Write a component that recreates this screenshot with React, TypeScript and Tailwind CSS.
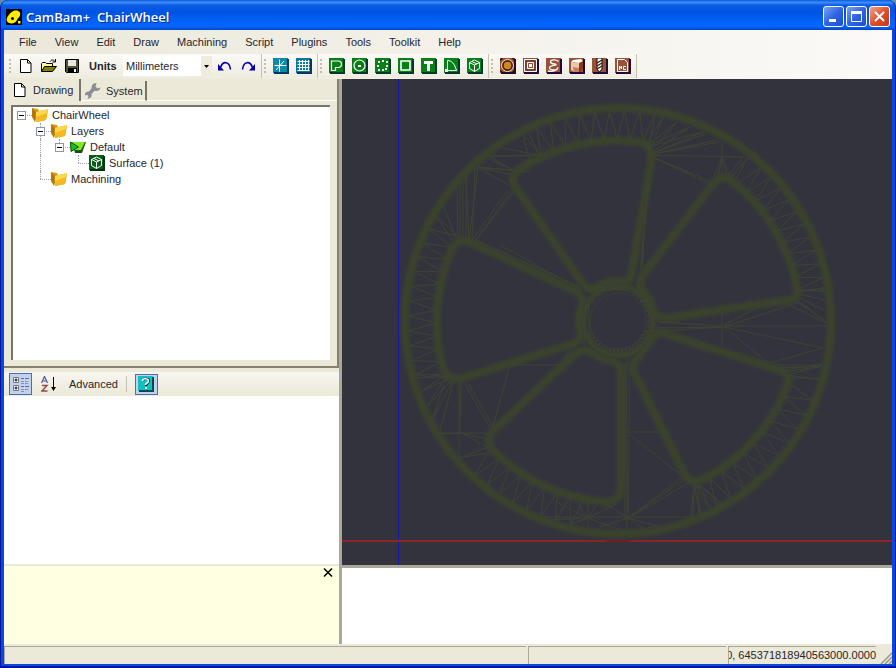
import type { ReactNode } from 'react';

const menus = ['File', 'View', 'Edit', 'Draw', 'Machining', 'Script', 'Plugins', 'Tools', 'Toolkit', 'Help'];

type Cell = 'blank' | 'line' | 'elbow' | 'root' | 'open' | 'last';

const tree: { label: string; cells: Cell[]; icon: 'folder' | 'layer' | 'surface' }[] = [
  { label: 'ChairWheel', cells: ['root'], icon: 'folder' },
  { label: 'Layers', cells: ['blank', 'open'], icon: 'folder' },
  { label: 'Default', cells: ['blank', 'line', 'last'], icon: 'layer' },
  { label: 'Surface (1)', cells: ['blank', 'line', 'blank', 'elbow'], icon: 'surface' },
  { label: 'Machining', cells: ['blank', 'elbow'], icon: 'folder' },
];

/* ---------- icons ---------- */

function Svg({ children, size = 16 }: { children: ReactNode; size?: number }) {
  return (
    <svg width={size} height={size} viewBox={`0 0 ${size} ${size}`} fill="none" aria-hidden="true" className="shrink-0">
      {children}
    </svg>
  );
}

function Tile({ color, shade, children }: { color: string; shade: string; children: ReactNode }) {
  return (
    <Svg>
      <path d="M1 1h15v15H1z" fill={shade} />
      <path d="M0 0h15v15H0z" fill={color} />
      <path d="M14.5 1v13.5H1" stroke={shade} />
      {children}
    </Svg>
  );
}

const NewIcon = () => (
  <Svg>
    <path d="M2.500 1.500h7l3.500 3.500v9.500H2.500z" fill="#fff" stroke="#000" />
    <path d="M9.500 1.500V5H13" stroke="#000" />
  </Svg>
);

const OpenIcon = () => (
  <Svg>
    <path d="M.5 13.500V5.500l1-1h3l1 1h6v3" fill="#ffff9c" stroke="#000" />
    <path d="M.5 13.500l3-5h12l-4 5z" fill="#808000" stroke="#000" />
    <path d="M9 3.500c1.500-2 3.500-2 5 0M14.500 1v3h-3" stroke="#000" />
  </Svg>
);

const SaveIcon = () => (
  <Svg>
    <path d="M1.500 1.500h13v13h-12l-1-1z" fill="#55552a" stroke="#000" />
    <path d="M4 2h8v6H4z" fill="#e8e8e8" />
    <path d="M4 10h9v5H4z" fill="#000" />
    <path d="M10 11h2v3h-2z" fill="#fff" />
  </Svg>
);

const UndoIcon = () => (
  <Svg>
    <path d="M3.500 9.500C6 2.500 12.500 3 13.500 11.500" stroke="#0000a8" strokeWidth="1.600" />
    <path d="M1 6v6.500h6z" fill="#0000a8" />
  </Svg>
);

const RedoIcon = () => (
  <Svg>
    <path d="M12.500 9.500C10 2.500 3.500 3 2.500 11.500" stroke="#0000a8" strokeWidth="1.600" />
    <path d="M15 6v6.500H9z" fill="#0000a8" />
  </Svg>
);

const viewTools = [
  {
    name: 'Show axis',
    icon: (
      <Tile color="#0c8aa8" shade="#003a60">
        <path d="M6.500 1.500v12M1.500 7.500h12M3 12l8-9" stroke="#fff" />
      </Tile>
    ),
  },
  {
    name: 'Show grid',
    icon: (
      <Tile color="#0878a0" shade="#003a60">
        <path d="M3.500 2v11M6.500 2v11M9.500 2v11M12.500 2v11M1.500 3.500h12M1.500 6.500h12M1.500 9.500h12M1.500 12.500h12" stroke="#fff" />
      </Tile>
    ),
  },
];

const drawTools = [
  { name: 'Polyline', art: <path d="M2.500 12.500v-9.500h7a3 3 0 0 1 3 3.500a3 3 0 0 1-3 3h-3v3z" stroke="#fff" strokeWidth="1.200" /> },
  {
    name: 'Circle',
    art: (
      <>
        <circle cx="7.500" cy="7.500" r="5.500" stroke="#fff" strokeWidth="1.200" />
        <path d="M6 7h3v2H6z" fill="#fff" />
      </>
    ),
  },
  {
    name: 'Point list',
    art: <path d="M3 3h2v2H3zM7 2h2v2H7zM11 3h2v2h-2zM2 7h2v2H2zM11 7h2v2h-2zM3 11h2v2H3zM7 11h2v2H7zM10 10h2v2h-2z" fill="#fff" />,
  },
  { name: 'Rectangle', art: <path d="M3 3h9v9H3z" stroke="#fff" strokeWidth="1.600" /> },
  { name: 'Text', art: <path d="M3 3h9v3H9v7H6V6H3z" fill="#fff" /> },
  {
    name: 'Arc',
    art: (
      <>
        <path d="M3.500 12.500v-10c4 0 7 3 9 10z" stroke="#fff" />
        <path d="M1 11h3v3H1z" fill="#fff" />
      </>
    ),
  },
  { name: 'Surface', art: <Cube /> },
];

function Cube() {
  return <path d="M2.500 4.500l5-2.500 5 2.500v6l-5 3-5-3zM2.500 4.500l5 2.500 5-2.500M7.500 7v6.500M5 3.500l5 2.500" stroke="#fff" />;
}

const camTools = [
  {
    name: 'Profile',
    art: (
      <>
        <circle cx="7.500" cy="7.500" r="6" stroke="#ffdca8" />
        <circle cx="7.500" cy="7.500" r="4.500" fill="#d08818" stroke="#382008" strokeWidth="1.400" />
        <path d="M0 2.500L2.500 0M12.500 0L15 2.500M0 12.500L2.500 15M12 15l3-3" stroke="#281008" strokeWidth="1.400" />
      </>
    ),
  },
  {
    name: 'Pocket',
    art: (
      <>
        <path d="M1.500 1.500h12v12h-12zM4.500 4.500h6v6h-6z" stroke="#fff" />
        <path d="M3 3h9v9H3z" stroke="#5c3020" />
        <path d="M6 6h3v3H6z" fill="#fff" />
      </>
    ),
  },
  {
    name: 'Drill',
    art: (
      <path
        d="M12.500 3.500C10 1 4 1.500 4.500 4s5 1.500 5.500 2.500-6 .5-6.500 3 5 3 7 2M2 13c4 1 9 0 10-3.500"
        stroke="#fff"
        strokeWidth="1.300"
      />
    ),
  },
  {
    name: '3D surface',
    art: (
      <>
        <path d="M2 4v8l3 2h6l3-3V3z" fill="#8a3818" />
        <path d="M2 4l2-2 8-1 2 2-4 2z" fill="#fff" />
        <path d="M2 4l8 1v9H5l-3-2z" fill="#e8c8b0" />
        <path d="M4 9l6 1v4H5z" fill="#c08060" />
      </>
    ),
  },
  {
    name: 'Lathe',
    art: (
      <>
        <path d="M5 0h5v11l-2.500 3L5 11z" fill="#fff" stroke="#201008" />
        <path d="M5 5l5-3M5 8l5-3M5 11l5-3" stroke="#301810" strokeWidth="1.300" />
      </>
    ),
  },
  {
    name: 'NC file',
    art: (
      <>
        <path d="M2.500 1.500h7l3 3v9h-10z" stroke="#fff" />
        <path d="M4.500 12V8l2 3V8M11 8.500H8.500v3H11" stroke="#fff" />
      </>
    ),
  },
];

const FolderIcon = () => (
  <Svg>
    <path d="M0 1l6 1 1 2 9-1-2 10-10 2z" fill="#d89a10" />
    <path d="M0 1l4 4-1 10-3-5z" fill="#b07808" />
    <path d="M4 5l12-3-2 11-10 2z" fill="#f4b820" />
    <path d="M4 5l12-3-1 4-11 4z" fill="#ffd850" />
  </Svg>
);

const LayerIcon = () => (
  <Svg>
    <path d="M2 3h14l-4 11H5z" fill="#205010" />
    <path d="M2 3h13l-4 8H5z" fill="#80e828" />
    <path d="M.5 3l8 5-7.500 4.500z" fill="#18c020" stroke="#085008" />
  </Svg>
);

const SurfaceIcon = () => (
  <Tile color="#086018" shade="#003010">
    <Cube />
  </Tile>
);

const WrenchIcon = () => (
  <Svg size={18}>
    <path
      d="M16.500 5.500l-3 1-2-2 1-3.200c-3-.6-5.500 1.700-4.700 4.800L5 9.500C2.500 9 .500 11 1 13.500l2-.8 1.500 1.500-1 2.200c3 .2 4.700-2 4-4.500l3-3.200c3.300.8 6-.8 6-3.200z"
      fill="#8c8c94"
    />
  </Svg>
);

/* ---------- toolbar ---------- */

function Grip() {
  return (
    <div className="flex w-[3px] flex-col gap-[2px]">
      {[0, 1, 2, 3].map((i) => (
        <span key={i} className="size-[2px] bg-[#c1beb0]" />
      ))}
    </div>
  );
}

function Strip({ children, first }: { children: ReactNode; first?: boolean }) {
  return (
    <div
      className={`flex h-6 items-center gap-[2px] border-r border-[#c5c2b4] bg-linear-to-b from-[#fbfaf6] to-[#efecdf] pr-[2px] ${first ? 'pl-[5px]' : 'pl-[2px]'}`}
    >
      <Grip />
      <div className="flex items-center">{children}</div>
    </div>
  );
}

function Tool({ name, children }: { name: string; children: ReactNode }) {
  return (
    <button type="button" aria-label={name} className="flex h-[22px] w-[23px] items-center justify-center">
      {children}
    </button>
  );
}

/* ---------- tree ---------- */

function TreeCell({ kind }: { kind: Cell }) {
  const hasBox = kind === 'root' || kind === 'open' || kind === 'last';
  return (
    <span className="relative block h-4 w-[19px] shrink-0">
      {(kind === 'line' || kind === 'open') && (
        <span className="absolute inset-y-0 left-2 border-l border-dotted border-[#a0a0a0]" />
      )}
      {(kind === 'elbow' || kind === 'last') && (
        <span className="absolute top-0 left-2 h-2 border-l border-dotted border-[#a0a0a0]" />
      )}
      {kind !== 'line' && kind !== 'blank' && (
        <span className="absolute top-2 right-0 left-2 border-t border-dotted border-[#a0a0a0]" />
      )}
      {hasBox && (
        <button
          type="button"
          aria-label="Collapse"
          className="absolute top-1 left-1 flex size-[9px] items-center justify-center border border-[#8c98a8] bg-white"
        >
          <span className="h-px w-[5px] bg-black" />
        </button>
      )}
    </span>
  );
}

/* ---------- model view ---------- */

const CX = 618;
const CY = 321;

function polar(r: number, deg: number) {
  const a = (deg * Math.PI) / 180;
  return `${(CX + r * Math.cos(a)).toFixed(1)} ${(CY + r * Math.sin(a)).toFixed(1)}`;
}

function zigzag(r1: number, r2: number, from: number, to: number, steps: number) {
  const pts: string[] = [];
  for (let i = 0; i <= steps; i++) {
    pts.push(polar(i % 2 ? r2 : r1, from + ((to - from) * i) / steps));
  }
  return 'M' + pts.join('L');
}

function fan(x: number, y: number, ends: number[][]) {
  return ends.map(([ex, ey]) => `M${x} ${y}L${ex} ${ey}`).join('');
}

const pockets = [
  'M516 188L583 284Q589 292 597 287Q607 281 619 281Q629 284 631 276L651 163Q653 143 638 142A179 179 0 0 0 520 169Q508 177 516 188Z',
  'M713 184L643 275Q637 283 643 291Q650 298 653 309Q656 319 666 318L788 300Q799 298 797 288A179 179 0 0 0 733 182Q722 173 713 184Z',
  'M663 333L779 370Q792 375 787 386A179 179 0 0 1 706 478Q691 486 684 473L634 372Q630 364 638 358L649 343Q654 332 663 333Z',
  'M574 355L493 431Q485 439 492 449A179 179 0 0 0 606 502Q621 501 621 487L621 372Q621 362 610 361Q602 359 593 353Q583 347 574 355Z',
  'M474 244L573 290Q584 295 582 305Q577 317 580 330Q583 341 572 344L462 378Q448 381 443 368A179 179 0 0 1 453 247Q460 237 474 244Z',
];

const mesh = [
  zigzag(182, 210, -119, -80, 19),
  zigzag(182, 210, -49, -8, 21),
  zigzag(182, 210, 20, 62, 19),
  zigzag(182, 210, 101, 135, 16),
  zigzag(182, 210, 163, 210, 23),
  zigzag(28, 36, 20, 160, 36),
  zigzag(29, 38, -60, 20, 16),
  fan(648, 155, [[663, 117], [677, 122], [690, 127], [703, 132], [705, 134], [717, 140], [719, 142], [743, 157], [712, 182], [708, 183], [655, 114]]),
  fan(644, 148, [[663, 117], [677, 122], [690, 127], [703, 132]]),
  'M722 142V178M722 157l-8 20M722 157l8 20M722 157l-4 20M722 157l5 20M748 158l-18 20M748 158l-12 20M743 157l-14 18',
  fan(540, 155, [[502, 148], [490, 157], [488, 156], [529, 134]]),
  fan(513, 170, [[490, 157], [486, 158], [477, 167], [530, 158]]),
  fan(477, 167, [[508, 185], [513, 175], [530, 172]]),
  'M460 240V182M463 240V179M466 240V177M469 240L466 177M472 240L475 168M469 240L478 168M458 240L457 186M456 238L443 205M452 240L436 216',
  'M472 240L508 190M475 241L512 190M478 238L515 190M475 240L580 287M500 245L582 290',
  fan(455, 376, [[417, 378], [420, 392], [427, 407], [433, 418], [440, 430]]),
  fan(447, 374, [[417, 378], [420, 392], [427, 407], [433, 418]]),
  'M459 380V458M461 380L460 432M464 383L492 430M467 382L494 428M492 430L510 365H562L572 342M440 433H490M440 434L462 433L488 448M460 458L488 447M465 457L492 452M462 433L490 440M566 358L578 342',
  'M545 517H692M588 500V528M588 518l-30-15M588 518l28-14M588 518l-42 2M588 518l35 13M588 518l-28 10M588 518l-12-16M588 518l10-16',
  'M627 360V530M630 368L628 518M625 362V518M628 518L606 504M628 518L688 477M628 518L684 476M628 518L690 482M628 518l32 9M628 518l18 12M628 518l-28 9M627 432H660M630 435L690 482',
  fan(694, 484, [[691, 516], [693, 516], [700, 518], [702, 516], [712, 512], [720, 508]]),
  fan(698, 484, [[700, 518], [712, 512], [722, 506], [724, 505]]),
  'M722 315V346M660 322L720 326H826M656 328L722 327M660 331L722 327M724 327L823 348L770 363M724 327L768 363M724 327L800 302M724 325L760 306',
  'M775 365H822M778 368L822 366M785 372L822 366M788 375L820 380M788 378H818M788 375L822 366M785 370L822 364',
  'M797 300L826 322M795 300L824 320M785 303L826 323M800 298L823 310M800 294L824 300M798 290H824M800 292L824 288',
  'M650 170L640 272M648 175L642 270M586 300L584 345M588 300L590 340M584 290H625M590 292L628 287M656 322H680M590 286L628 290M630 283L652 318M638 285L650 312',
].join('');

const layers = [
  { color: '#353838', width: 12 },
  { color: '#383e32', width: 8 },
  { color: '#3a422e', width: 5 },
];

function Wheel() {
  return (
    <svg
      viewBox="342 79 550 486"
      preserveAspectRatio="xMidYMid meet"
      className="block size-full"
      fill="none"
      role="img"
      aria-label="ChairWheel surface"
    >
      {layers.map((s) => (
        <g key={s.width} stroke={s.color} strokeWidth={s.width} strokeLinejoin="round">
          <circle cx={CX} cy={CY} r="213" />
          <circle cx={CX} cy={CY} r="35" strokeWidth={s.width - 2} />
          {pockets.map((d) => (
            <path key={d} d={d} />
          ))}
        </g>
      ))}
      <circle cx={CX} cy={CY} r="28" stroke="#3a4030" />
      <path d={mesh} stroke="#3d4433" strokeWidth="1" />
      <path d="M398.500 -1500V2500" stroke="#1616a8" />
      <path d="M-1500 541H2500" stroke="#8c2325" strokeWidth="2" />
      <path d="M605 541H631" stroke="#7a1a22" strokeWidth="2" />
    </svg>
  );
}

/* ---------- window ---------- */

const captionButton = 'flex size-[21px] items-center justify-center rounded-[3px] border border-white';

export default function App() {
  return (
    <div className="flex h-screen min-h-[480px] flex-col bg-[#5b8fb0] font-['Liberation_Sans',Arial,sans-serif] text-[11px] leading-4 text-[#26262c]">
      <div className="flex min-h-0 flex-1 flex-col rounded-t-lg border-x border-b-2 border-[#0014a0] bg-[#0a48dc]">
        {/* Title bar */}
        <header className="flex h-[30px] shrink-0 items-center rounded-t-lg bg-[linear-gradient(to_bottom,#0a5be0_0%,#3c8cf8_8%,#0a5ce4_18%,#0053e1_40%,#0062f8_70%,#0466ff_88%,#0046c8_100%)] px-[5px] pt-[3px]">
          <svg width="16" height="16" viewBox="0 0 16 16" aria-hidden="true">
            <path d="M0 0h16v16H0z" fill="#000" />
            <path d="M1 9C2 6 6 2 9 1.500c4-.5 6 2 5 5-.5 2-2.500 2.500-3 4.500-1 3-5 4-8 3-2-.8-3-3-2-5z" fill="#ffee00" />
            <circle cx="6.500" cy="9.500" r="1.500" fill="#000" />
            <path d="M12 12h2.500v2.500H12z" fill="#ffee00" />
          </svg>
          <h1 className="ml-1 flex-1 font-['Open_Sans',sans-serif] text-[13px] font-semibold whitespace-pre text-white [text-shadow:1px_1px_#0a2a90]">
            CamBam+  ChairWheel
          </h1>
          <div className="flex gap-[2px]">
            <button type="button" aria-label="Minimize" className={`${captionButton} bg-linear-to-br from-[#7ba2f0] via-[#2f62e4] to-[#1c4ed0]`}>
              <svg width="13" height="13">
                <path d="M2 9h7v3H2z" fill="#fff" />
              </svg>
            </button>
            <button type="button" aria-label="Maximize" className={`${captionButton} bg-linear-to-br from-[#7ba2f0] via-[#2f62e4] to-[#1c4ed0]`}>
              <svg width="13" height="13" fill="none">
                <path d="M1.500 2.500h10v9h-10z" stroke="#fff" />
                <path d="M1 1h11v3H1z" fill="#fff" />
              </svg>
            </button>
            <button type="button" aria-label="Close" className={`${captionButton} bg-linear-to-br from-[#f0a088] via-[#e0502c] to-[#c03818]`}>
              <svg width="13" height="13">
                <path d="M2 2l9 9M11 2l-9 9" stroke="#fff" strokeWidth="2" />
              </svg>
            </button>
          </div>
        </header>

        <div className="mx-[3px] mb-[2px] flex min-h-0 flex-1 flex-col bg-[#ece9d8]">
          {/* Menu and toolbars */}
          <div className="shrink-0 bg-linear-to-r from-[#ebe8da] to-[#fbfaf8] pb-px">
            <nav className="flex h-6 items-center gap-[18px] pl-[15px]">
              {menus.map((m) => (
                <button key={m} type="button">
                  {m}
                </button>
              ))}
            </nav>
            <div className="flex h-6">
              <Strip first>
                <Tool name="New"><NewIcon /></Tool>
                <Tool name="Open"><OpenIcon /></Tool>
                <Tool name="Save"><SaveIcon /></Tool>
                <label htmlFor="units" className="ml-[6px] w-[34px] font-bold">
                  Units
                </label>
                <div className="relative mr-px">
                  <select id="units" className="block h-5 w-[89px] appearance-none bg-white pl-[3px] outline-none">
                    <option>Millimeters</option>
                    <option>Inches</option>
                  </select>
                  <span className="pointer-events-none absolute inset-y-0 right-0 flex w-[11px] items-center justify-center bg-[#efecdf]">
                    <svg width="5" height="3">
                      <path d="M0 0h5L2.500 3z" fill="#000" />
                    </svg>
                  </span>
                </div>
                <Tool name="Undo"><UndoIcon /></Tool>
                <Tool name="Redo"><RedoIcon /></Tool>
              </Strip>
              <Strip>
                {viewTools.map((t) => (
                  <Tool key={t.name} name={t.name}>
                    {t.icon}
                  </Tool>
                ))}
              </Strip>
              <Strip>
                {drawTools.map((t) => (
                  <Tool key={t.name} name={t.name}>
                    <Tile color="#088018" shade="#00382c">{t.art}</Tile>
                  </Tool>
                ))}
              </Strip>
              <Strip>
                {camTools.map((t) => (
                  <Tool key={t.name} name={t.name}>
                    <Tile color="#98523a" shade="#200838">{t.art}</Tile>
                  </Tool>
                ))}
              </Strip>
            </div>
          </div>

          <div className="flex min-h-0 flex-1">
            {/* Left column */}
            <aside className="flex w-[335px] shrink-0 flex-col">
              <section className="flex h-[289px] shrink-0 flex-col border-r-2 border-b-2 border-[#85816f]">
                <div role="tablist" className="flex h-[22px] shrink-0 items-end">
                  <button type="button" role="tab" aria-selected="true" className="flex h-[22px] w-[77px] items-center gap-[5px] border-r-2 border-[#77746a] pl-2">
                    <NewIcon />
                    Drawing
                  </button>
                  <button type="button" role="tab" aria-selected="false" className="flex h-5 w-[66px] items-center gap-1 border-r-2 border-b border-r-[#77746a] border-b-white pl-[3px]">
                    <WrenchIcon />
                    System
                  </button>
                  <span className="flex-1 border-b border-white" />
                </div>
                <ul className="mx-[7px] mt-1 mb-[6px] flex-1 border-t-2 border-l-2 border-[#77746a] bg-white">
                  {tree.map((n) => (
                    <li key={n.label} className="flex h-4 items-center">
                      {n.cells.map((c, i) => (
                        <TreeCell key={i} kind={c} />
                      ))}
                      {n.icon === 'folder' && <FolderIcon />}
                      {n.icon === 'layer' && <LayerIcon />}
                      {n.icon === 'surface' && <SurfaceIcon />}
                      <span className="pl-1">{n.label}</span>
                    </li>
                  ))}
                </ul>
              </section>

              <section className="flex min-h-0 flex-1 flex-col pt-1">
                <div className="flex h-6 shrink-0 items-center bg-linear-to-b from-[#f8f6f0] to-[#ece9d8] pl-[5px]">
                  <button type="button" aria-label="Categorized" className="flex h-[22px] w-[23px] items-center justify-center border border-[#4a6fb0] bg-[#c1d2ee]">
                    <Svg>
                      <path d="M.5 1.500h5v5h-5zM.5 9.500h5v5h-5z" fill="#fff" stroke="#707880" />
                      <path d="M1.500 4h3M3 2.500v3M1.500 12h3M3 10.500v3" stroke="#000" />
                      <path d="M8 2.500h3M8 10.500h3M12 2.500h4M12 10.500h4" stroke="#6868a0" />
                      <path d="M8 5.500h3M12 5.500h3M8 7.500h3M12 7.500h3M8 13.500h3M12 13.500h3M8 15.500h3" stroke="#8a93a8" />
                    </Svg>
                  </button>
                  <button type="button" aria-label="Alphabetical" className="ml-1 flex h-[22px] w-[25px] items-center justify-center">
                    <Svg>
                      <path d="M.5 7L3.500 0.500L6.500 7M2 5h4" stroke="#4858a0" strokeWidth="1.200" />
                      <path d="M1 9.500h5l-5 5.500h5.500" stroke="#904848" strokeWidth="1.400" />
                      <path d="M12.500 1v12" stroke="#000" />
                      <path d="M10 11h5l-2.500 4z" fill="#000" />
                    </Svg>
                  </button>
                  <button type="button" className="ml-2">
                    Advanced
                  </button>
                  <span className="ml-2 h-4 w-px bg-[#c5c2b4]" />
                  <button type="button" aria-label="Help" className="ml-2 flex h-[21px] w-[23px] items-center justify-center border border-[#4a6fb0] bg-[#c1d2ee]">
                    <Tile color="#10c0c0" shade="#004850">
                      <path d="M5 5c0-3 6-3 6 0 0 2-3 2-3 5" stroke="#000" strokeWidth="2" />
                      <path d="M4.500 5c0-3 6-3 6 0 0 2-3 2-3 4" stroke="#fff" strokeWidth="1.600" />
                      <path d="M7 11h2v2H7z" fill="#fff" />
                    </Tile>
                  </button>
                </div>
                <div className="flex-1 bg-white" />
              </section>

              <section className="flex h-20 shrink-0 items-start justify-end border-t-2 border-[#ece9d8] bg-[#ffffe1] pr-[5px]">
                <button type="button" aria-label="Close help" className="flex size-3 items-center justify-center">
                  <svg width="10" height="9">
                    <path d="M1 0.500l8 8M9 0.500l-8 8" stroke="#000" strokeWidth="1.500" />
                  </svg>
                </button>
              </section>
            </aside>

            {/* Drawing and message areas */}
            <main className="flex min-w-0 flex-1 flex-col border-l-[3px] border-[#aca899]">
              <div className="min-h-0 flex-1 overflow-hidden bg-[#33333d]">
                <Wheel />
              </div>
              <div className="h-[79px] shrink-0 border-t-[3px] border-[#aca899] bg-white" />
            </main>
          </div>

          {/* Status bar */}
          <footer className="flex h-5 shrink-0 items-stretch gap-[2px] pt-[2px]">
            <div className="min-w-0 flex-1 border-t border-l border-[#aca899]" />
            <div className="w-[198px] border-t border-l border-[#aca899]" />
            <div className="flex w-[148px] items-start justify-end overflow-hidden border-t border-l border-[#aca899] whitespace-nowrap">
              0, 645371818940563000.0000
            </div>
            <div className="flex w-[14px] items-end justify-end">
              <svg width="12" height="12">
                <path d="M1 12L12 1M5 12l7-7M9 12l3-3" stroke="#9a9788" strokeWidth="1.500" />
              </svg>
            </div>
          </footer>
        </div>
      </div>
    </div>
  );
}
